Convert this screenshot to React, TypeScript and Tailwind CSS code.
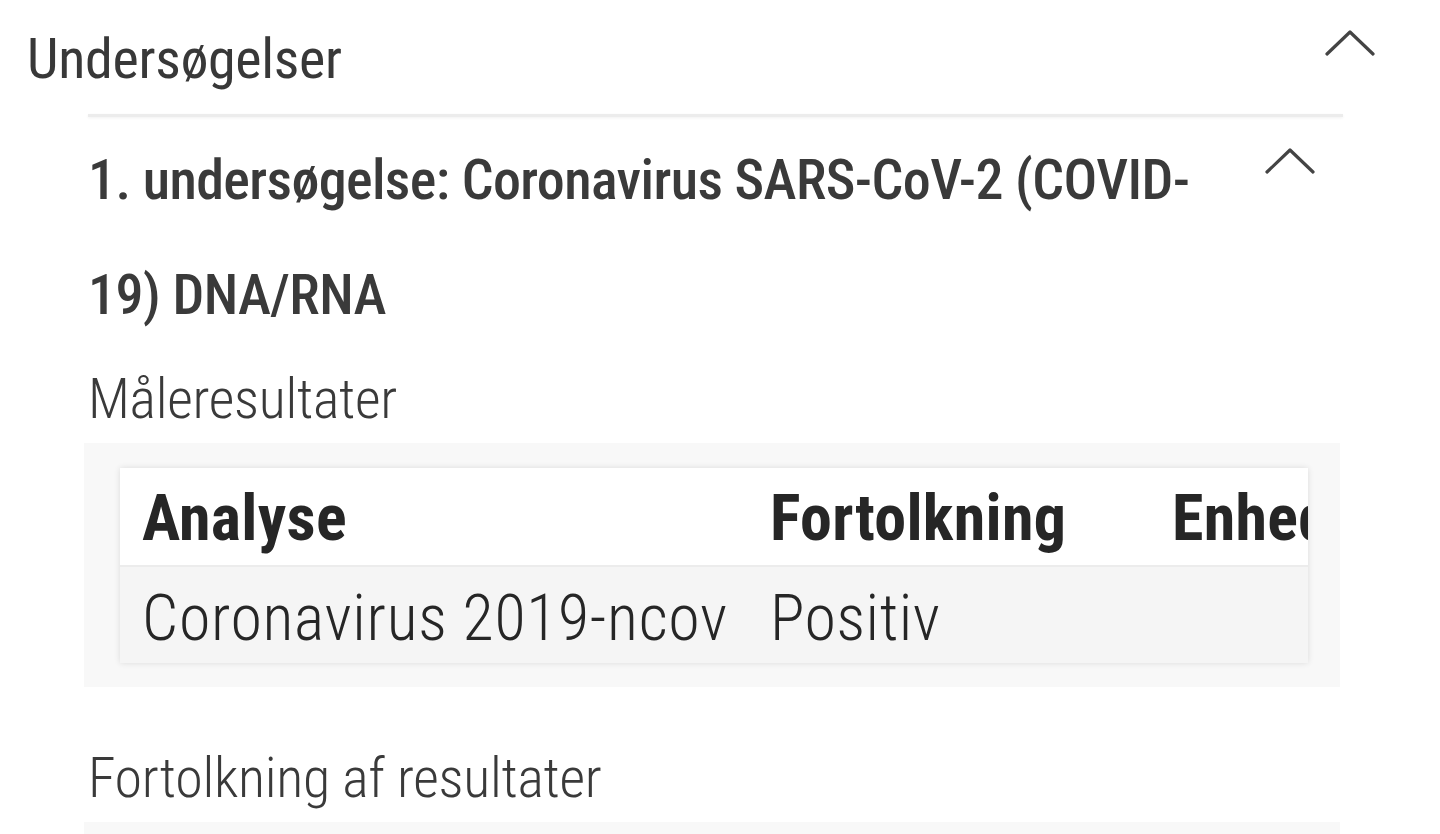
function Chevron({ className }: { className?: string }) {
  return (
    <svg viewBox="0 0 50 26" className={className} fill="none" stroke="#444" strokeWidth="3.2" strokeLinecap="round" strokeLinejoin="round">
      <polyline points="2,24 25,2 48,24" />
    </svg>
  );
}

export default function App() {
  return (
    <div
      className="w-[1440px] h-[834px] overflow-hidden bg-white text-[#383838]"
      style={{ fontFamily: "'Roboto Condensed', 'Roboto', sans-serif" }}
    >
      {/* Section header */}
      <div className="flex items-start justify-between pl-[27px] pr-[65px] pt-[31px]">
        <div className="text-[56px] leading-[56px] font-normal tracking-[-0.3px]">Undersøgelser</div>
        <Chevron className="w-[50px] h-[26px] mt-[-1px]" />
      </div>

      <div className="ml-[88px] mr-[97px]">
        <div className="mt-[27px] h-[3px] bg-[#ececec] shadow-[0_1px_3px_rgba(0,0,0,0.06)]" />

        {/* Examination title */}
        <div className="flex items-start justify-between pt-[6px] pr-[28px]">
          <div className="text-[56px] leading-[115px] font-medium text-[#3a3a3a] tracking-[-0.6px] whitespace-nowrap">
            1. undersøgelse: Coronavirus SARS-CoV-2 (COVID-
            <br />
            19) DNA/RNA
          </div>
          <Chevron className="w-[50px] h-[26px] mt-[25px]" />
        </div>

        <div className="mt-[18px] text-[56px] leading-[56px] font-light text-[#3a3a3a] tracking-[-0.3px]">Måleresultater</div>

        {/* Results card */}
        <div className="mt-[16px] ml-[-4px] mr-[3px] bg-[#f8f8f8] pt-[25px] pb-[24px] pl-[36px] pr-[32px]">
          <div className="overflow-hidden shadow-[0_0_6px_rgba(0,0,0,0.12)]">
            <div className="grid grid-cols-[650px_402px_400px] w-max text-[64px] text-[#262626]">
              <div className="h-[97px] pt-[4px] leading-[93px] pl-[22px] bg-white font-bold tracking-[0.3px]">Analyse</div>
              <div className="h-[97px] pt-[4px] leading-[93px] bg-white font-bold tracking-[0.3px]">Fortolkning</div>
              <div className="h-[97px] pt-[4px] leading-[93px] bg-white font-bold tracking-[0.3px] whitespace-nowrap">Enhed</div>
              <div className="h-[98px] pt-[6px] leading-[92px] pl-[22px] bg-[#f5f5f5] border-t-[2px] border-[#ececec] font-light tracking-[0.7px] whitespace-nowrap">Coronavirus 2019-ncov</div>
              <div className="h-[98px] pt-[6px] leading-[92px] bg-[#f5f5f5] border-t-[2px] border-[#ececec] font-light tracking-[0.5px]">Positiv</div>
              <div className="h-[98px] bg-[#f5f5f5] border-t-[2px] border-[#ececec]" />
            </div>
          </div>
        </div>

        <div className="mt-[63px] text-[56px] leading-[56px] font-light text-[#3a3a3a] tracking-[-0.3px]">Fortolkning af resultater</div>

        <div className="mt-[16px] ml-[-4px] mr-[3px] h-[60px] bg-[#f8f8f8]" />
      </div>
    </div>
  );
}
